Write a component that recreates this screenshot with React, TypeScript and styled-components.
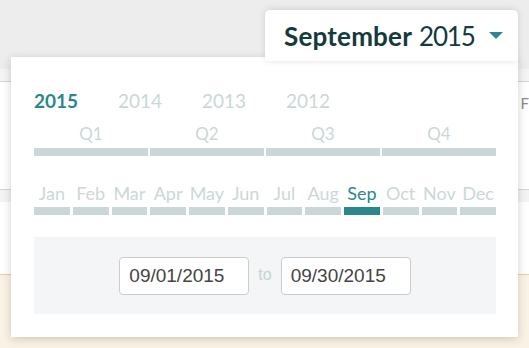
import React from "react";
import styled, { createGlobalStyle } from "styled-components";

const GlobalStyle = createGlobalStyle`
  html, body {
    margin: 0;
    padding: 0;
    height: 100%;
    overflow: hidden;
  }
  body {
    background: #faf3e5;
    font-family: "Lato", "Open Sans", sans-serif;
  }
`;

const Page = styled.div`
  position: relative;
  width: 529px;
  height: 348px;
  display: flex;
  flex-direction: column;
`;

const Header = styled.div`
  height: 69px;
  background: #ededed;
`;

const Toolbar = styled.div`
  height: 12px;
  background: #f4f4f4;
  border-bottom: 1px solid #d3d3d3;
`;

const TableArea = styled.div`
  display: flex;
  flex-direction: column;
  background: #fff;
  border-bottom: 1px solid #f1c99b;
`;

const Row = styled.div<{ $h: number }>`
  height: ${(p) => p.$h}px;
  display: flex;
  justify-content: flex-end;
  align-items: flex-start;
`;

const HeadBand = styled.div`
  height: 12px;
  background: #f3f3f3;
  border-top: 1px solid #d6d6d6;
`;

const ColLabel = styled.span`
  margin: 12px 0 0;
  font-family: "Lato", sans-serif;
  font-size: 15px;
  line-height: 18px;
  color: #8a8a8a;
`;

const Footer = styled.div`
  flex: 1;
  background: #faf3e5;
`;

const Tab = styled.button`
  position: absolute;
  left: 265px;
  top: 10px;
  width: 253px;
  height: 52px;
  box-sizing: border-box;
  z-index: 3;
  border: none;
  border-bottom: 1px solid #f3f3f3;
  border-radius: 5px 5px 0 0;
  background: #fff;
  box-shadow: 0 -1px 6px rgba(0, 0, 0, 0.12);
  display: flex;
  align-items: center;
  padding: 0 15px 0 19px;
  font-family: "Lato", sans-serif;
  color: #143a3e;
  font-size: 26px;
  cursor: pointer;
`;

const TabMonth = styled.span`
  font-weight: 700;
  letter-spacing: 0.2px;
`;

const TabYear = styled.span`
  font-weight: 400;
  margin-left: 7px;
  letter-spacing: -1.2px;
`;

const Caret = styled.span`
  margin-left: auto;
  width: 0;
  height: 0;
  border-left: 7.5px solid transparent;
  border-right: 7.5px solid transparent;
  border-top: 7.5px solid #2b878b;
`;

const Popover = styled.div`
  position: absolute;
  left: 11px;
  top: 57px;
  width: 507px;
  height: 280px;
  box-sizing: border-box;
  z-index: 2;
  background: #fff;
  box-shadow: 0 2px 9px rgba(0, 0, 0, 0.18);
  padding: 32px 22px 23px 23px;
  display: flex;
  flex-direction: column;
`;

const Years = styled.div`
  display: flex;
  gap: 41px;
  height: 22px;
  align-items: center;
`;

const Year = styled.span<{ $active?: boolean }>`
  font-size: 19px;
  font-weight: ${(p) => (p.$active ? 700 : 400)};
  color: ${(p) => (p.$active ? "#2b878b" : "#cbd7d7")};
  width: 43px;
`;

const PeriodGrid = styled.div<{ $cols: number; $gap: number; $top: number }>`
  display: grid;
  grid-template-columns: repeat(${(p) => p.$cols}, 1fr);
  column-gap: ${(p) => p.$gap}px;
  margin-top: ${(p) => p.$top}px;
`;

const Period = styled.div`
  display: flex;
  flex-direction: column;
  align-items: center;
  gap: 4px;
`;

const PeriodLabel = styled.span<{ $active?: boolean; $size: number }>`
  font-size: ${(p) => p.$size}px;
  line-height: 20px;
  height: 20px;
  color: ${(p) => (p.$active ? "#2b878b" : "#cbd7d7")};
  white-space: nowrap;
`;

const Bar = styled.div<{ $active?: boolean }>`
  width: 100%;
  height: 8px;
  background: ${(p) => (p.$active ? "#2b878b" : "#cbd7d7")};
`;

const RangeBox = styled.div`
  margin-top: 22px;
  height: 77px;
  background: #f3f5f6;
  display: flex;
  justify-content: center;
  align-items: center;
  gap: 9px;
`;

const DateInput = styled.input`
  width: 130px;
  height: 38px;
  box-sizing: border-box;
  border: 1px solid #cccccc;
  border-radius: 4px;
  padding: 0 0 0 9px;
  font-family: "Liberation Sans", Arial, sans-serif;
  font-size: 19px;
  color: #444;
  background: #fff;
  outline: none;
`;

const To = styled.span`
  font-family: "Liberation Sans", Arial, sans-serif;
  font-size: 16px;
  color: #c5d3d3;
  margin-top: -2px;
`;

const years = ["2015", "2014", "2013", "2012"];
const quarters = ["Q1", "Q2", "Q3", "Q4"];
const months = [
  "Jan", "Feb", "Mar", "Apr", "May", "Jun",
  "Jul", "Aug", "Sep", "Oct", "Nov", "Dec",
];

const App: React.FC = () => {
  const activeMonth = 8;

  return (
    <>
      <GlobalStyle />
      <Page>
        <Header />
        <Toolbar />
        <TableArea>
          <Row $h={107}>
            <ColLabel>F</ColLabel>
          </Row>
          <HeadBand />
          <Row $h={72} />
        </TableArea>
        <Footer />

        <Tab>
          <TabMonth>September</TabMonth>
          <TabYear>2015</TabYear>
          <Caret />
        </Tab>

        <Popover>
          <Years>
            {years.map((y, i) => (
              <Year key={y} $active={i === 0}>
                {y}
              </Year>
            ))}
          </Years>

          <PeriodGrid $cols={4} $gap={2} $top={13}>
            {quarters.map((q) => (
              <Period key={q}>
                <PeriodLabel $size={17}>{q}</PeriodLabel>
                <Bar />
              </Period>
            ))}
          </PeriodGrid>

          <PeriodGrid $cols={12} $gap={3} $top={27}>
            {months.map((m, i) => (
              <Period key={m}>
                <PeriodLabel $size={18} $active={i === activeMonth}>
                  {m}
                </PeriodLabel>
                <Bar $active={i === activeMonth} />
              </Period>
            ))}
          </PeriodGrid>

          <RangeBox>
            <DateInput defaultValue="09/01/2015" />
            <To>to</To>
            <DateInput defaultValue="09/30/2015" />
          </RangeBox>
        </Popover>
      </Page>
    </>
  );
};

export default App;
